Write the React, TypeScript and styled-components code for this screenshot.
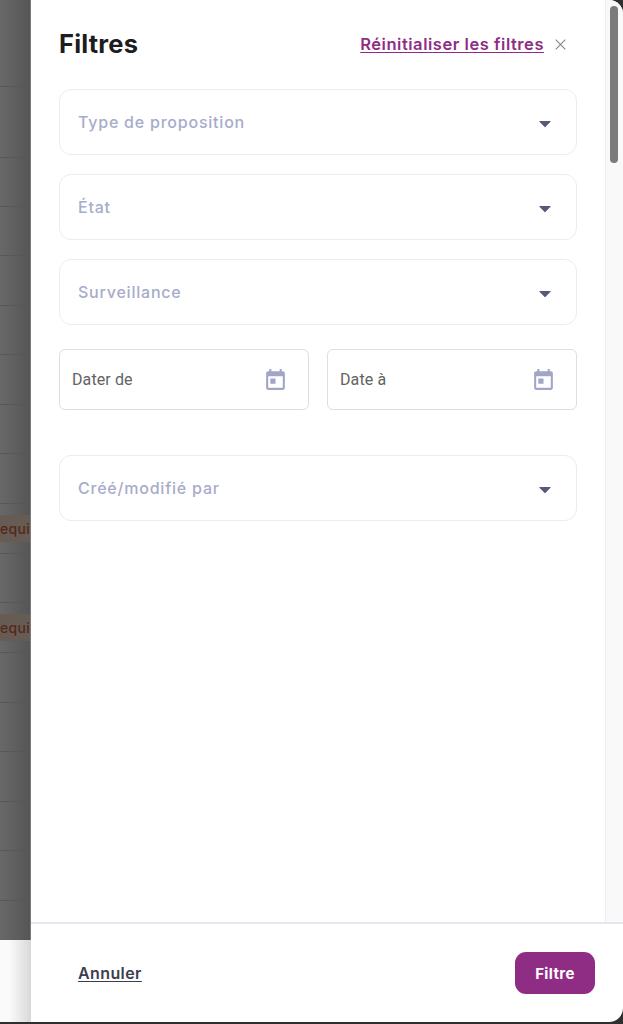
import React from 'react';
import styled, { createGlobalStyle } from 'styled-components';

const GlobalStyle = createGlobalStyle`
  html, body {
    margin: 0;
    padding: 0;
    height: 100%;
    background: #2f2f2f;
    overflow: hidden;
  }
  * {
    box-sizing: border-box;
  }
`;

const Page = styled.div`
  display: flex;
  width: 623px;
  height: 1022px;
  font-family: 'Inter', 'Liberation Sans', sans-serif;
`;

const Backdrop = styled.div`
  display: flex;
  flex-direction: column;
  width: 31px;
  flex-shrink: 0;
  overflow: hidden;
`;

const BackdropRows = styled.div`
  height: 940px;
  background: linear-gradient(90deg, #686868, #565656 96%, #7c7c7c 96%);
`;

const BackdropRow = styled.div<{ $height: number }>`
  display: flex;
  align-items: center;
  width: 30px;
  height: ${(p) => p.$height}px;
  border-bottom: 1px solid #585858;
`;

const Badge = styled.span`
  flex: 1;
  padding: 5px 0;
  background: #665c54;
  color: #54281a;
  font-size: 14px;
  font-weight: 500;
  letter-spacing: 0.3px;
  white-space: nowrap;
`;

const BackdropFooter = styled.div`
  flex: 1;
  background: linear-gradient(90deg, #fafafa 30%, #d8d8d8);
`;

const Drawer = styled.div`
  flex: 1;
  display: flex;
  flex-direction: column;
  min-width: 0;
  background: #fff;
  border-radius: 0 14px 14px 0;
  overflow: hidden;
`;

const Main = styled.div`
  flex: 1;
  display: flex;
  min-height: 0;
`;

const Content = styled.div`
  flex: 1;
  padding: 0 28px;
`;

const Header = styled.div`
  display: flex;
  align-items: center;
  height: 89px;
  padding-bottom: 1px;
`;

const Title = styled.h1`
  flex: 1;
  margin: 0 0 2px;
  color: #1d1d1f;
  font-size: 25.5px;
  font-weight: 700;
  letter-spacing: 0.2px;
`;

const ResetLink = styled.a`
  color: #8f2c84;
  font-size: 16.5px;
  font-weight: 600;
  letter-spacing: 0.54px;
  text-decoration: underline;
  text-underline-offset: 2px;
`;

const CloseButton = styled.button`
  display: flex;
  margin: 0 11px 0 11px;
  padding: 0;
  border: 0;
  background: none;
`;

const Fields = styled.div`
  display: flex;
  flex-direction: column;
`;

const SelectField = styled.div<{ $after?: number }>`
  display: flex;
  align-items: center;
  justify-content: space-between;
  height: 66px;
  margin-bottom: ${(p) => p.$after ?? 19}px;
  padding: 0 24px 0 18px;
  border: 1px solid #ebebf3;
  border-radius: 12px;
  background: #fff;
`;

const Placeholder = styled.span`
  color: #a7acca;
  font-size: 16px;
  font-weight: 500;
  letter-spacing: 0.78px;
`;

const CaretSvg = styled.svg`
  margin-top: 3px;
`;

const DateRow = styled.div`
  display: grid;
  grid-template-columns: 250px 250px;
  column-gap: 18px;
  margin: 5px 0 45px;
`;

const DateField = styled.div`
  display: flex;
  align-items: center;
  justify-content: space-between;
  height: 61px;
  padding: 0 20px 0 12px;
  border: 1px solid #dedee3;
  border-radius: 6px;
`;

const DateLabel = styled.span`
  color: #636363;
  font-family: 'Roboto', 'Liberation Sans', sans-serif;
  font-size: 16px;
  letter-spacing: 0.1px;
`;

const CalendarSvg = styled.svg`
  margin-top: 2px;
`;

const ScrollTrack = styled.div`
  width: 18px;
  flex-shrink: 0;
  padding: 6px 5px 0 4px;
  background: #f9f9fa;
  border-left: 1px solid #eeeeef;
`;

const ScrollThumb = styled.div`
  width: 8px;
  height: 157px;
  border-radius: 4px;
  background: #7b7b7b;
`;

const Footer = styled.div`
  display: flex;
  align-items: center;
  justify-content: space-between;
  height: 100px;
  padding: 0 28px 0 47px;
  border-top: 2px solid #e6e6ee;
`;

const CancelLink = styled.a`
  color: #3d3d50;
  font-size: 16px;
  font-weight: 600;
  letter-spacing: 0.4px;
  text-decoration: underline;
  text-underline-offset: 2px;
`;

const SubmitButton = styled.button`
  width: 80px;
  height: 42px;
  border: 0;
  border-radius: 11px;
  background: #8f2c84;
  color: #fff;
  font-family: inherit;
  font-size: 15px;
  font-weight: 700;
  letter-spacing: 0.4px;
`;

const Caret = () => (
  <CaretSvg width="14" height="8" viewBox="0 0 14 9" aria-hidden="true">
    <path d="M1.2 1h11.6c.5 0 .8.6.4 1L7.4 7.9a.6.6 0 0 1-.8 0L.8 2c-.4-.4-.1-1 .4-1z" fill="#565a7a" />
  </CaretSvg>
);

const CalendarIcon = () => (
  <CalendarSvg width="25" height="25" viewBox="0 0 24 24" aria-hidden="true">
    <path
      d="M19 3h-1V1h-2v2H8V1H6v2H5c-1.11 0-1.99.9-1.99 2L3 19c0 1.1.89 2 2 2h14c1.1 0 2-.9 2-2V5c0-1.1-.9-2-2-2zm0 16H5V8h14v11zM7 10h5v5H7z"
      fill="#a2a6c6"
    />
  </CalendarSvg>
);

const CloseIcon = () => (
  <svg width="11" height="11" viewBox="0 0 11 11" aria-hidden="true">
    <path d="M.7.7l9.6 9.6M10.3.7L.7 10.3" stroke="#85858f" strokeWidth="1.1" fill="none" />
  </svg>
);

const backdropRows = [
  { height: 87 },
  { height: 71 },
  { height: 49 },
  { height: 49 },
  { height: 50 },
  { height: 49 },
  { height: 50 },
  { height: 49 },
  { height: 50 },
  { height: 50, badge: 'equi' },
  { height: 49 },
  { height: 50, badge: 'equi' },
  { height: 50 },
  { height: 49 },
  { height: 50 },
  { height: 49 },
  { height: 50 },
];

export default function App() {
  return (
    <>
      <GlobalStyle />
      <Page>
        <Backdrop>
          <BackdropRows>
            {backdropRows.map((row, i) => (
              <BackdropRow key={i} $height={row.height}>
                {row.badge && <Badge>{row.badge}</Badge>}
              </BackdropRow>
            ))}
          </BackdropRows>
          <BackdropFooter />
        </Backdrop>
        <Drawer>
          <Main>
            <Content>
              <Header>
                <Title>Filtres</Title>
                <ResetLink href="#">Réinitialiser les filtres</ResetLink>
                <CloseButton aria-label="Fermer">
                  <CloseIcon />
                </CloseButton>
              </Header>
              <Fields>
                <SelectField>
                  <Placeholder>Type de proposition</Placeholder>
                  <Caret />
                </SelectField>
                <SelectField>
                  <Placeholder>État</Placeholder>
                  <Caret />
                </SelectField>
                <SelectField>
                  <Placeholder>Surveillance</Placeholder>
                  <Caret />
                </SelectField>
                <DateRow>
                  <DateField>
                    <DateLabel>Dater de</DateLabel>
                    <CalendarIcon />
                  </DateField>
                  <DateField>
                    <DateLabel>Date à</DateLabel>
                    <CalendarIcon />
                  </DateField>
                </DateRow>
                <SelectField>
                  <Placeholder>Créé/modifié par</Placeholder>
                  <Caret />
                </SelectField>
              </Fields>
            </Content>
            <ScrollTrack>
              <ScrollThumb />
            </ScrollTrack>
          </Main>
          <Footer>
            <CancelLink href="#">Annuler</CancelLink>
            <SubmitButton>Filtre</SubmitButton>
          </Footer>
        </Drawer>
      </Page>
    </>
  );
}
